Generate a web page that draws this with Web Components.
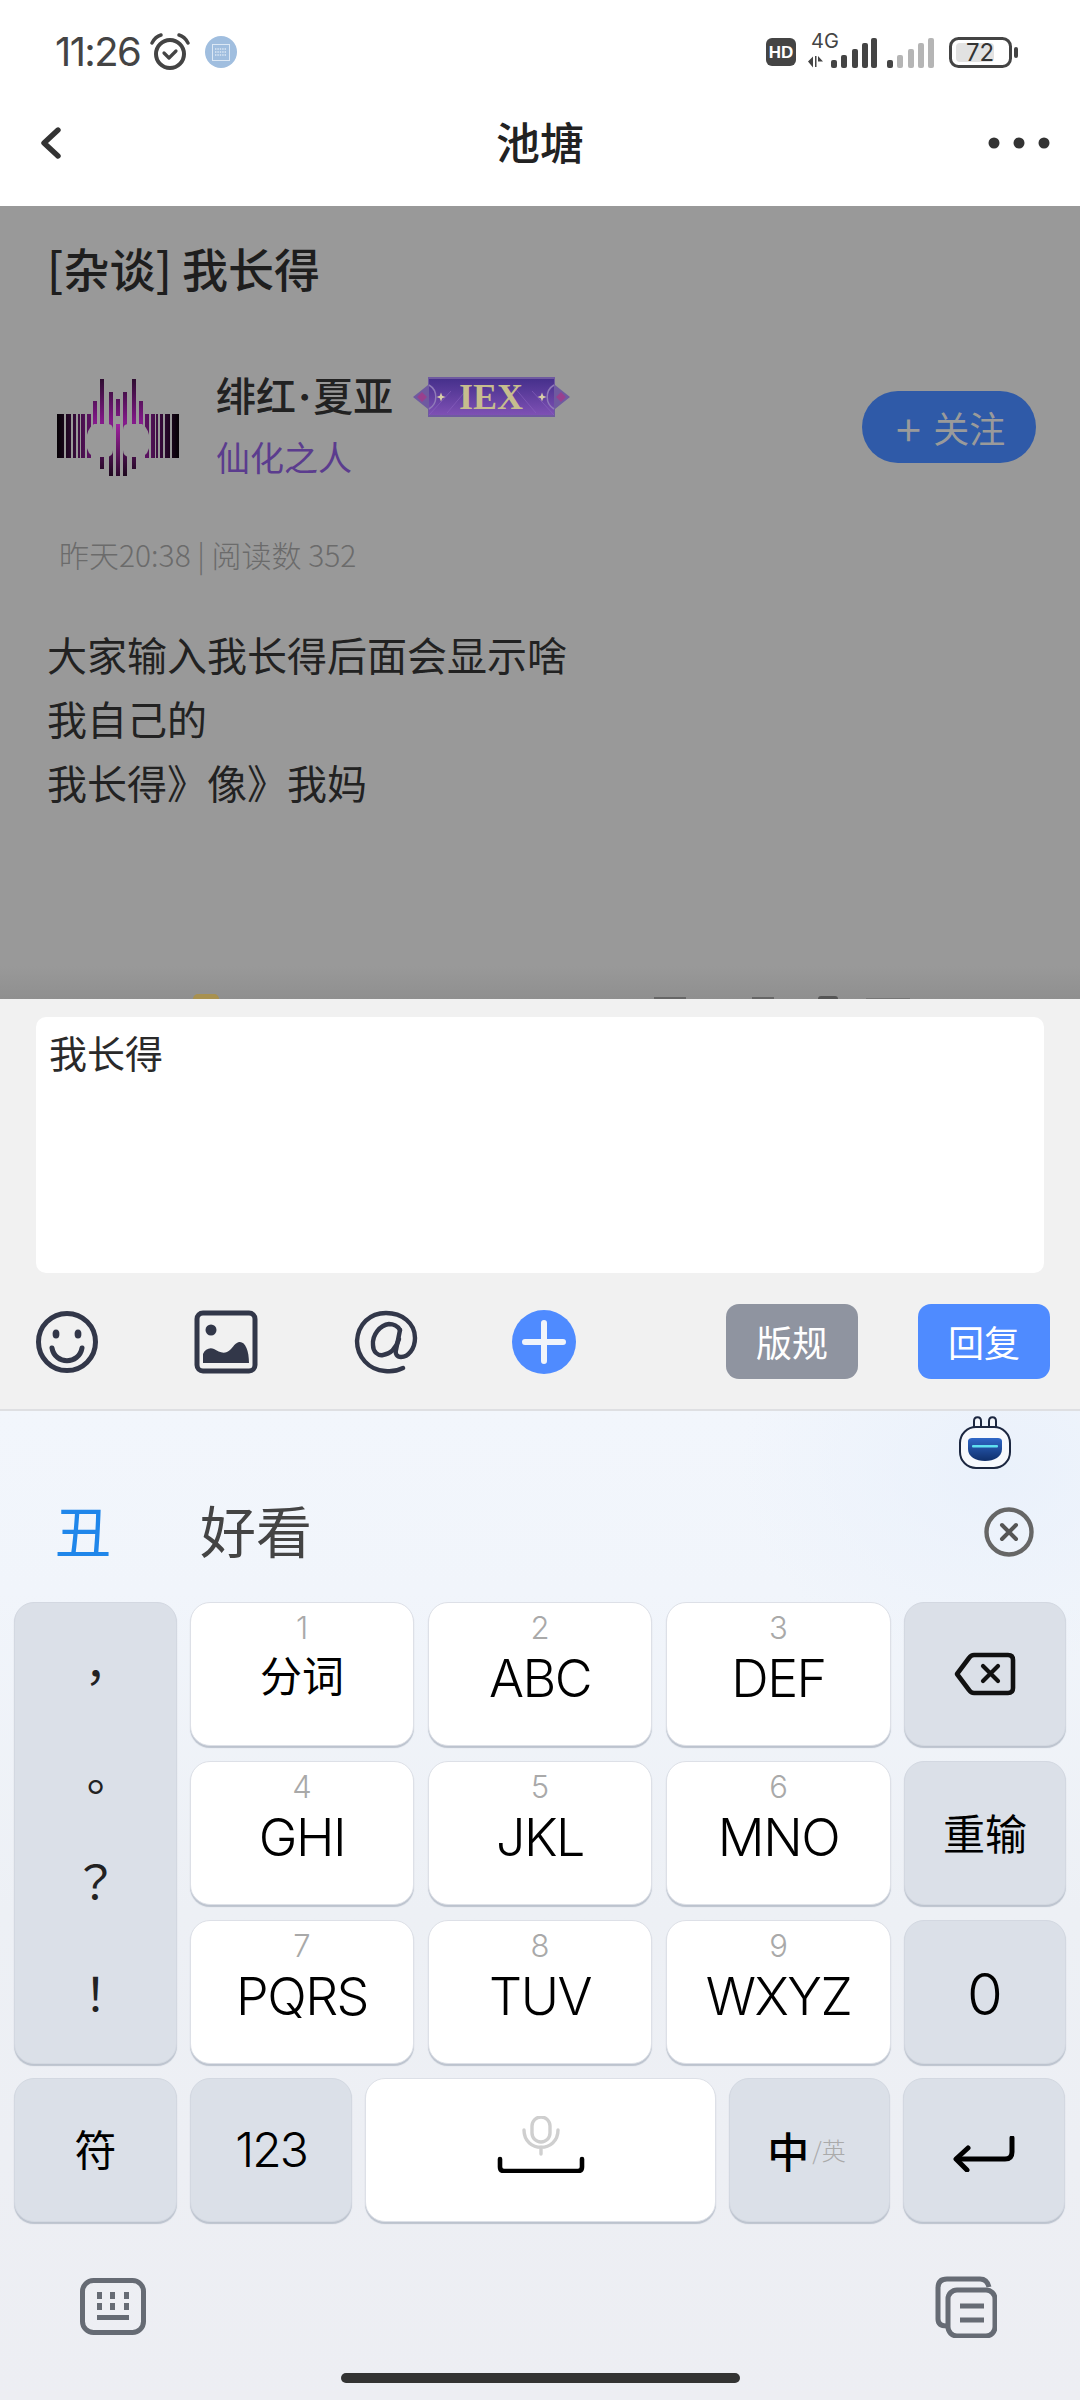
<!DOCTYPE html>
<html lang="zh">
<head>
<meta charset="utf-8">
<title>池塘</title>
<style>
  html, body { margin: 0; padding: 0; }
  body { width: 1080px; height: 2400px; overflow: hidden; background: #fff;
    font-family: "Noto Sans CJK SC", "Noto Sans", sans-serif; }
</style>
</head>
<body>
<status-bar></status-bar>
<nav-bar>池塘</nav-bar>
<post-view></post-view>
<reply-panel></reply-panel>
<ime-keyboard></ime-keyboard>

<script>
const cjk = `"Noto Sans CJK SC", sans-serif`;
const latin = `Inter, "Noto Sans CJK SC", sans-serif`;

// top system bar
class StatusBar extends HTMLElement {
  constructor() {
    super();
    this.attachShadow({ mode: 'open' });
    const on = [[831,60],[841,55],[852,49],[862,43],[871,38]];
    const off = [[887,60],[897,55],[908,49],[918,43],[928,38]];
    const bars = (list, fill) => list.map((b, i) =>
      `<rect x="${b[0]}" y="${b[1]}" width="6" height="${68 - b[1]}" rx="2" fill="${i == 0 ? '#444' : fill}"/>`).join('');
    this.shadowRoot.innerHTML = `
    <style>
      :host { display: flex; align-items: flex-start; height: 80px; color: #444; position: relative; }
      .time { font: 400 40px/38px ${latin}; letter-spacing: -1.6px; margin: 33px 0 0 55px; width: 95px; white-space: nowrap; }
      .alarm { margin-top: 33px; width: 40px; height: 37px; }
      .ime { margin: 36px 0 0 15px; width: 32px; height: 32px; border-radius: 50%; background: #a0bedf;
        display: flex; align-items: center; justify-content: center; }
      .sys { position: absolute; left: 760px; top: 0; }
      .four { font: 400 20px ${latin}; fill: #444; }
      .num { font: 400 24px ${latin}; fill: #333; }
    </style>
    <span class="time">11:26</span>
    <svg class="alarm" viewBox="0 0 40 37" fill="none" stroke="#444">
      <circle cx="20" cy="21" r="14" stroke-width="4"/>
      <path d="M14 20l5 5 7-7" stroke-width="3.2" stroke-linecap="round" stroke-linejoin="round"/>
      <path d="M2 10C4 6 7 3 11 2M38 10C36 6 33 3 29 2" stroke-width="3.4" stroke-linecap="round"/>
    </svg>
    <span class="ime">
      <svg width="18" height="17" viewBox="0 0 18 17" fill="none">
        <rect x=".5" y=".5" width="17" height="16" stroke="#dce8f5"/>
        <path d="M3 5h12M3 8h12M3 11h12" stroke="#dce8f5" stroke-width="1.4" stroke-dasharray="1.4 1"/>
      </svg>
    </span>
    <svg class="sys" width="320" height="80" viewBox="760 0 320 80">
      <rect x="766" y="38" width="30" height="28" rx="6" fill="#444"/>
      <text x="781" y="58" text-anchor="middle" style="font:700 17px 'Liberation Sans',sans-serif;fill:#fff">HD</text>
      <text x="811" y="48" class="four">4G</text>
      <path d="M808 61.5l5-5v11zM815 56h1.5v11H815zM818 56l5 5.5h-5z" fill="#444"/>
      ${bars(on, '#444')}${bars(off, '#b5b5b5')}
      <rect x="950.5" y="38.5" width="60" height="28" rx="8" fill="none" stroke="#444" stroke-width="3"/>
      <rect x="956" y="43" width="38" height="19" rx="4" fill="#e2e2e2"/>
      <text x="980" y="61" text-anchor="middle" class="num">72</text>
      <rect x="1014" y="47" width="4" height="11" rx="2" fill="#444"/>
    </svg>`;
  }
}
customElements.define('status-bar', StatusBar);

// white title row
class NavBar extends HTMLElement {
  constructor() {
    super();
    this.attachShadow({ mode: 'open' });
    this.shadowRoot.innerHTML = `
    <style>
      :host { display: grid; grid-template-columns: 1fr auto 1fr; align-items: center; height: 126px;
        box-sizing: border-box; padding: 0 30px 0 40px; background: #fff; }
      .title { font: 500 44px/60px ${cjk}; color: #222; margin: -5px 10px 0 0; }
      svg { display: block; }
      .more { justify-self: end; }
    </style>
    <svg width="21" height="32" viewBox="0 0 21 32" fill="none"><path d="M18 3L4 16l14 13" stroke="#333" stroke-width="5.4" stroke-linecap="round" stroke-linejoin="round"/></svg>
    <span class="title"><slot></slot></span>
    <svg class="more" width="62" height="12" viewBox="0 0 62 12" fill="#333"><circle cx="6" cy="6" r="5.5"/><circle cx="31" cy="6" r="5.5"/><circle cx="56" cy="6" r="5.5"/></svg>`;
  }
}
customElements.define('nav-bar', NavBar);

// barcode avatar, stripes with two blobs knocked out for the eyes
class UserAvatar extends HTMLElement {
  constructor() {
    super();
    this.attachShadow({ mode: 'open' });
    let out = '';
    [[0,7],[9,5],[16,3],[21,2],[24,4],[30,4]].forEach(s => {
      out += `<rect x="${s[0]}" y="35" width="${s[1]}" height="44" fill="url(#g)"/>`;
      out += `<rect x="${122 - s[0] - s[1]}" y="35" width="${s[1]}" height="44" fill="url(#g)"/>`;
    });
    [[36,4,22,28],[43,4,0,45],[52,4,13,40],[43,4,73,17],[52,4,67,30]].forEach(c => {
      out += `<rect x="${c[0]}" y="${c[2]}" width="${c[1]}" height="${c[3]}" fill="url(#v)"/>`;
      out += `<rect x="${122 - c[0] - c[1]}" y="${c[2]}" width="${c[1]}" height="${c[3]}" fill="url(#v)"/>`;
    });
    out += `<path d="M37 45h14q5 0 5 6v20q0 7-7 7H38q-8-2-9-14q0-14 8-19z" fill="#999"/>`;
    out += `<path d="M85 45H71q-5 0-5 6v20q0 7 7 7h11q8-2 9-14q0-14-8-19z" fill="#999"/>`;
    out += `<rect x="59" y="20" width="4" height="17" fill="url(#v)"/><rect x="59" y="45" width="4" height="52" fill="url(#c)"/>`;
    this.shadowRoot.innerHTML = `
    <style>:host { display: block; width: 122px; height: 97px; } svg { display: block; }</style>
    <svg width="122" height="97" viewBox="0 0 122 97">
      <defs>
        <linearGradient id="g" gradientUnits="userSpaceOnUse" x1="0" x2="122" y1="0" y2="0">
          <stop offset="0" stop-color="#050105"/><stop offset=".26" stop-color="#5a1260"/><stop offset=".74" stop-color="#5a1260"/><stop offset="1" stop-color="#050105"/>
        </linearGradient>
        <linearGradient id="v" gradientUnits="userSpaceOnUse" x1="0" x2="0" y1="0" y2="97"><stop offset="0" stop-color="#2e0d30"/><stop offset=".45" stop-color="#851a8c"/><stop offset="1" stop-color="#1e081e"/></linearGradient>
        <linearGradient id="c" x1="0" x2="0" y1="0" y2="1"><stop offset="0" stop-color="#a024a0"/><stop offset="1" stop-color="#2c0a2c"/></linearGradient>
      </defs>
      ${out}
    </svg>`;
  }
}
customElements.define('user-avatar', UserAvatar);

// level badge
class LevelBadge extends HTMLElement {
  constructor() {
    super();
    this.attachShadow({ mode: 'open' });
    this.shadowRoot.innerHTML = `
    <style>
      :host { display: block; width: 157px; height: 40px; }
      svg { display: block; }
      text { font: 700 36px/36px "Liberation Serif", serif; fill: #c6bd8e; }
    </style>
    <svg width="157" height="40" viewBox="0 0 157 40">
      <defs><linearGradient id="b" x1="0" x2="0" y1="0" y2="1"><stop offset="0" stop-color="#46308c"/><stop offset="1" stop-color="#7e50b4"/></linearGradient></defs>
      <path d="M15 6h127v2l15 12-15 12v2H15v-2L0 20l15-12z" fill="#6f5aa0"/>
      <rect x="15" y="0" width="127" height="40" fill="#6f5aa0"/>
      <rect x="16" y="2" width="125" height="36" fill="url(#b)"/>
      <path d="M34 36l22-26M123 36L101 10M16 38l22-24M141 38l-22-24" stroke="#8a63c0" stroke-width="1" opacity=".6"/>
      <path d="M16 8a14 14 0 0 1 0 24M141 8a14 14 0 0 0 0 24" fill="none" stroke="#8f7ab8" stroke-width="1.5"/>
      <path d="M9 15l5 5-5 5-5-5zM148 15l5 5-5 5-5-5z" fill="#98408e"/>
      <path d="M28 15.5l1.2 3.3 3.3 1.2-3.3 1.2-1.2 3.3-1.2-3.3-3.3-1.2 3.3-1.2zM129 15.5l1.2 3.3 3.3 1.2-3.3 1.2-1.2 3.3-1.2-3.3-3.3-1.2 3.3-1.2z" fill="#d8cfa8"/>
      <text x="78" y="32" text-anchor="middle">IEX</text>
    </svg>`;
  }
}
customElements.define('level-badge', LevelBadge);

// dimmed post behind the reply sheet
class PostView extends HTMLElement {
  constructor() {
    super();
    this.attachShadow({ mode: 'open' });
    this.shadowRoot.innerHTML = `
    <style>
      :host { display: block; height: 793px; box-sizing: border-box; background: linear-gradient(#999 0, #999 760px, #8f8f8f 793px);
        padding: 32px 44px 0 47px; font-family: ${cjk}; overflow: hidden; position: relative; }
      h1 { margin: 0; font: 500 46px/58px ${cjk}; color: #1e1e1e; }
      .author { display: flex; align-items: flex-start; margin-top: 71px; }
      user-avatar { margin: 12px 0 0 10px; }
      .who { margin-left: 37px; flex: 1; }
      .line { display: flex; align-items: center; height: 40px; margin-top: 10px; }
      .name { font: 500 40px/40px ${cjk}; color: #222; margin: -3px 20px 0 0; white-space: nowrap; }
      .dot { font: 700 40px/40px ${latin}; margin: 0 2px; }
      .rank { font: 400 34px/40px ${cjk}; color: #5b3c8e; margin-top: 20px; }
      .follow { display: flex; align-items: center; justify-content: center; width: 174px; height: 72px; border-radius: 36px;
        background: #2f5aa8; color: #9a9a9a; font: 400 36px/72px ${cjk}; margin-top: 24px; }
      .plus { font: 300 48px/72px ${latin}; margin-right: 9px; }
      .meta { font: 300 30px/40px ${cjk}; color: #6b6b6b; margin: 57px 0 0 12px; }
      .body { margin-top: 48px; font: 400 40px/64px ${cjk}; color: #222; }
      .peek { position: absolute; bottom: 0; height: 5px; }
    </style>
    <h1>[杂谈] 我长得</h1>
    <div class="author">
      <user-avatar></user-avatar>
      <div class="who">
        <div class="line"><span class="name">绯红<span class="dot">·</span>夏亚</span><level-badge></level-badge></div>
        <div class="rank">仙化之人</div>
      </div>
      <div class="follow"><span class="plus">+</span>关注</div>
    </div>
    <div class="meta">昨天20:38 | 阅读数 352</div>
    <div class="body">大家输入我长得后面会显示啥<br>我自己的<br>我长得》像》我妈</div>
    <span class="peek" style="left:193px;width:26px;background:#a89150;border-radius:9px 9px 0 0"></span>
    <span class="peek" style="left:654px;width:32px;height:2px;background:#666"></span>
    <span class="peek" style="left:752px;width:22px;height:2px;background:#666"></span>
    <span class="peek" style="left:818px;width:20px;height:3px;background:#555;border-radius:9px 9px 0 0"></span>
    <span class="peek" style="left:866px;width:44px;height:1px;background:#777"></span>`;
  }
}
customElements.define('post-view', PostView);

// light sheet with input and toolbar
class ReplyPanel extends HTMLElement {
  constructor() {
    super();
    this.attachShadow({ mode: 'open' });
    this.shadowRoot.innerHTML = `
    <style>
      :host { display: block; height: 412px; box-sizing: border-box; background: #f1f1f1; border-bottom: 2px solid #dedfe2;
        padding: 18px 35px 0 36px; font-family: ${cjk}; }
      .input { height: 256px; background: #fff; border-radius: 10px; box-sizing: border-box; padding: 11px 13px;
        font: 400 38px/48px ${cjk}; color: #2a2a2a; width: 1008px; }
      .tools { display: flex; align-items: center; margin: 31px -5px 0 -1px; height: 75px; }
      .tools svg { display: block; flex: none; }
      .btn { width: 132px; height: 75px; border-radius: 13px; color: #fff; font: 400 36px/75px ${cjk}; text-align: center; }
      .gray { background: #8f94a0; margin-left: auto; }
      .blue { background: #4f8bff; margin-left: 60px; }
    </style>
    <div class="input">我长得</div>
    <div class="tools">
      <svg width="64" height="64" viewBox="0 0 64 64" fill="none" stroke="#323749" stroke-width="5">
        <circle cx="32" cy="32" r="28.5"/>
        <ellipse cx="21" cy="24" rx="3.4" ry="4.5" fill="#323749" stroke="none"/>
        <ellipse cx="43" cy="24" rx="3.4" ry="4.5" fill="#323749" stroke="none"/>
        <path d="M17 38c3 17 27 17 30 0" stroke-linecap="round"/>
      </svg>
      <svg style="margin-left:95px" width="64" height="64" viewBox="0 0 64 64" fill="none">
        <rect x="3" y="3" width="58" height="58" rx="6" stroke="#323749" stroke-width="5"/>
        <circle cx="17" cy="20" r="5.5" fill="#323749"/>
        <path d="M9 53V44c2-5 7-7 11-5s8 5 13 3 7-9 12-10c6-1 10 8 10 21z" fill="#323749"/>
      </svg>
      <svg style="margin-left:96px" width="64" height="64" viewBox="0 0 64 64" fill="none" stroke="#323749" stroke-width="4.4" stroke-linecap="round" stroke-linejoin="round">
        <path d="M49 58C45 60 38 62 31 61 15 60 3 47 3 31 4 14 16 3 32 3c16 0 29 10 29 25 0 11-7 19-14 19-4 0-6-3-5-7l4-20"/>
        <path d="M46 20c-2-4-7-6-11-6-9 1-17 11-16 21 0 7 5 11 10 10 8-1 13-7 16-16"/>
      </svg>
      <svg style="margin-left:94px" width="64" height="64" viewBox="0 0 64 64">
        <circle cx="32" cy="32" r="32" fill="#4f8bff"/>
        <path d="M32 13v38M13 32h38" stroke="#f1f4fa" stroke-width="6" stroke-linecap="round"/>
      </svg>
      <div class="btn gray">版规</div>
      <div class="btn blue">回复</div>
    </div>`;
  }
}
customElements.define('reply-panel', ReplyPanel);

// one keyboard key; num attr adds the small digit on top
class KeyCap extends HTMLElement {
  constructor() {
    super();
    this.attachShadow({ mode: 'open' });
    this.shadowRoot.innerHTML = `
    <style>
      :host { display: flex; flex-direction: column; align-items: center; justify-content: center; box-sizing: border-box;
        position: relative; height: 144px; border-radius: 20px; background: #fff; border: 1px solid #dde0e7;
        box-shadow: 0 2px 1px #bcc3ce; color: #000; font: 300 52px/60px ${latin}; letter-spacing: -1.5px; }
      :host([gray]) { background: #dbe0e8; border-color: #d3d8e1; }
      .n { position: absolute; top: 5px; left: 0; right: 0; text-align: center; font: 300 31px/40px ${latin}; color: #a9a9a9; letter-spacing: 0; }
      .m { margin-top: 9px; display: flex; align-items: center; justify-content: center; }
    </style>
    <span class="n"></span>
    <span class="m"><slot></slot></span>`;
  }
  connectedCallback() {
    const n = this.getAttribute('num');
    const el = this.shadowRoot.querySelector('.n');
    if (n) el.textContent = n;
    else {
      el.style.display = 'none';
      this.shadowRoot.querySelector('.m').style.marginTop = '0';
    }
  }
}
customElements.define('key-cap', KeyCap);

class ImeKeyboard extends HTMLElement {
  constructor() {
    super();
    this.attachShadow({ mode: 'open' });
    const keys = [['1','分词'],['2','ABC'],['3','DEF'],['4','GHI'],['5','JKL'],['6','MNO'],['7','PQRS'],['8','TUV'],['9','WXYZ']];
    const mainKeys = keys.map(k => k[1] == '分词'
      ? `<key-cap num="1"><span class="cn" style="margin-top:-10px">分词</span></key-cap>`
      : `<key-cap num="${k[0]}">${k[1]}</key-cap>`).join('');
    this.shadowRoot.innerHTML = `
    <style>
      :host { display: block; height: 989px; box-sizing: border-box; position: relative; overflow: hidden;
        background: radial-gradient(260px 200px at 1000px 60px, #eaf1fb 0, rgba(234,241,251,0) 100%),
          linear-gradient(180deg, #f2f6fc 0, #f1f5fb 180px, #edf0f5 500px, #edeef3 100%);
        font-family: ${cjk}; }
      .robot { display: block; margin: 4px 68px 0 auto; }
      .cand { display: flex; align-items: center; height: 75px; margin-top: 25px; padding-left: 55px; }
      .first { color: #1f86ea; font: 400 56px/75px ${cjk}; width: 145px; margin-top: -6px; }
      .word { color: #444; font: 400 56px/75px ${cjk}; margin-top: -6px; }
      .clear { margin: 0 46px 0 auto; display: block; }
      .board { display: grid; grid-template-columns: 163px 1fr 162px; column-gap: 13px; margin: 33px 15px 0 14px; }
      .punct { height: 462px; padding: 0; display: block; }
      .stack { display: grid; grid-template-rows: 144px 144px 144px; row-gap: 15px; }
      .mid { display: grid; grid-template-columns: 224px 224px 225px; gap: 15px 14px; }
      .last { display: flex; gap: 13px; margin: 14px 15px 0 14px; }
      .cn { font: 400 42px/60px ${cjk}; letter-spacing: 0; }
      .p { position: absolute; left: 0; right: 0; text-align: center; font: 400 46px/60px "Noto Sans CJK TC", sans-serif; color: #222; letter-spacing: 0; }
      svg { display: block; }
      .tools { display: flex; justify-content: space-between; margin: 54px 83px 0 80px; }
      .home { width: 399px; height: 10px; border-radius: 5px; background: #333; margin: 35px auto 0; }
      .zhong { font: 500 42px/60px ${cjk}; letter-spacing: 0; }
      .en { font: 300 24px/30px ${cjk}; color: #aaa; margin: 0 6px 0 3px; letter-spacing: 0; }
    </style>
    <svg class="robot" width="54" height="54" viewBox="0 0 54 54">
      <defs><linearGradient id="vis" x1="0" x2="0" y1="0" y2="1"><stop offset="0" stop-color="#2f67c7"/><stop offset="1" stop-color="#0f2f6b"/></linearGradient></defs>
      <path d="M16 14V6c0-5 7-5 7 0v6h8V6c0-5 7-5 7 0v8" fill="#f4f7fb" stroke="#1c2740" stroke-width="2"/>
      <rect x="2" y="12" width="50" height="41" rx="16" fill="#f7f9fd" stroke="#1c2740" stroke-width="2"/>
      <path d="M10 26c0-2 2-3 4-3h26c2 0 4 1 4 3v8c0 8-8 12-17 12s-17-4-17-12z" fill="url(#vis)"/>
      <rect x="14" y="30" width="26" height="2.5" rx="1" fill="#5fe0f0"/>
    </svg>
    <div class="cand">
      <span class="first">丑</span><span class="word">好看</span>
      <svg class="clear" width="50" height="50" viewBox="0 0 50 50" fill="none" stroke="#666">
        <circle cx="25" cy="25" r="22.5" stroke-width="4.4"/>
        <path d="M18 18l14 14M32 18L18 32" stroke-width="4" stroke-linecap="round" stroke="#555"/>
      </svg>
    </div>
    <div class="board">
      <key-cap gray class="punct">
        <span class="p" style="top:41px">，</span>
        <span class="p" style="top:151px">。</span>
        <span class="p" style="top:246px">？</span>
        <span class="p" style="top:358px">！</span>
      </key-cap>
      <div class="mid">${mainKeys}</div>
      <div class="stack">
        <key-cap gray>
          <svg width="62" height="44" viewBox="0 0 62 44" fill="none" stroke="#111" stroke-width="4.6" stroke-linejoin="round">
            <path d="M20 3h34q5 0 5 5v28q0 5-5 5H20q-3 0-5-3L3 22 15 6q2-3 5-3z"/>
            <path d="M29 14l15 15M44 14L29 29" stroke-linecap="round" stroke-width="4.2"/>
          </svg>
        </key-cap>
        <key-cap gray><span class="cn" style="margin-top:-2px">重输</span></key-cap>
        <key-cap gray style="font-size:58px;letter-spacing:0"><span style="margin-top:3px">0</span></key-cap>
      </div>
    </div>
    <div class="last">
      <key-cap gray style="width:163px"><span class="cn" style="margin-top:-5px">符</span></key-cap>
      <key-cap gray style="width:162px;font-size:48px;letter-spacing:-2px">123</key-cap>
      <key-cap style="width:351px">
        <svg width="90" height="57" viewBox="0 0 90 57" fill="none" style="margin-top:-11px">
          <g stroke="#cfcfcf" stroke-width="3.4" stroke-linecap="round">
            <rect x="36" y="1" width="18" height="25" rx="9"/>
            <path d="M28 14c0 23 34 23 34 0M45 31v7"/>
          </g>
          <path d="M4 43v8q0 4 4 4h74q4 0 4-4v-8" stroke="#000" stroke-width="4.6" stroke-linecap="round"/>
        </svg>
      </key-cap>
      <key-cap gray style="width:161px;flex-direction:row"><span class="zhong">中</span><span class="en">/英</span></key-cap>
      <key-cap gray style="width:162px">
        <svg width="62" height="36" viewBox="0 0 62 36" fill="none" stroke="#000" stroke-width="5" stroke-linecap="round" stroke-linejoin="round" style="margin-top:8px">
          <path d="M59 2v14q0 7-7 7H4"/>
          <path d="M15 12L3 23l11 11"/>
        </svg>
      </key-cap>
    </div>
    <div class="tools">
      <svg width="66" height="57" viewBox="0 0 66 57" fill="none" style="margin-top:2px">
        <rect x="2.5" y="2.5" width="61" height="52" rx="11" stroke="#666b74" stroke-width="5"/>
        <g fill="#666b74">
          <rect x="17" y="14" width="5" height="7"/><rect x="30" y="14" width="5" height="7"/><rect x="44" y="14" width="5" height="7"/>
          <rect x="17" y="25" width="5" height="7"/><rect x="30" y="25" width="5" height="7"/><rect x="44" y="25" width="5" height="7"/>
          <rect x="17" y="37" width="32" height="5"/>
        </g>
      </svg>
      <svg width="62" height="62" viewBox="0 0 62 62" fill="none" stroke="#666b74" stroke-width="5">
        <path d="M12 50q-9 0-9-7V12q0-9 9-9h33q7 0 9 8"/>
        <rect x="13" y="14" width="47" height="46" rx="9" fill="#edeef3"/>
        <path d="M25 30h24M25 44h24" stroke-width="5"/>
      </svg>
    </div>
    <div class="home"></div>`;
  }
}
customElements.define('ime-keyboard', ImeKeyboard);
</script>
</body>
</html>
